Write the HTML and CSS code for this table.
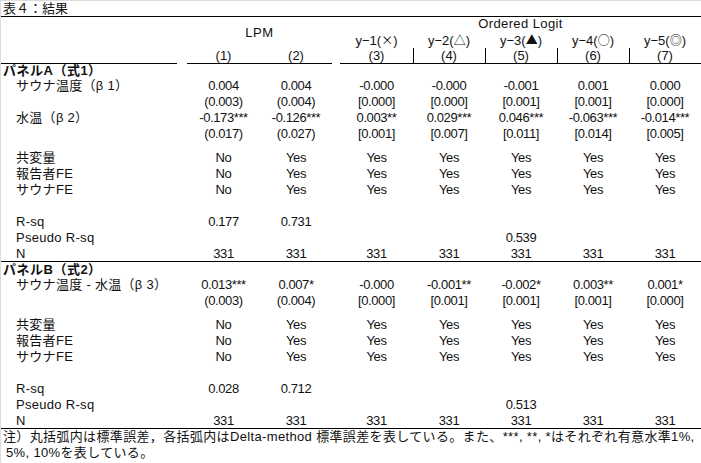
FILE: index.html
```html
<!DOCTYPE html>
<html lang="ja">
<head>
<meta charset="utf-8">
<title>表4：結果</title>
<link rel="stylesheet" href="styles.css">
</head>
<body>
<div class="sheet">
  <div class="title">表４：結果</div>

  <div class="head">
    <div class="h-label"></div>
    <div class="h-lpm">LPM</div>
    <div class="h-ol">Ordered Logit</div>
    <div class="h-y c3">y−1(<span class="sym">×</span>)</div>
    <div class="h-y c4">y−2(<span class="sym">△</span>)</div>
    <div class="h-y c5">y−3(<span class="sym">▲</span>)</div>
    <div class="h-y c6">y−4(<span class="sym">○</span>)</div>
    <div class="h-y c7">y−5(<span class="sym">◎</span>)</div>
    <div class="h-n c1">(1)</div>
    <div class="h-n c2">(2)</div>
    <div class="h-n c3">(3)</div>
    <div class="h-n c4">(4)</div>
    <div class="h-n c5">(5)</div>
    <div class="h-n c6">(6)</div>
    <div class="h-n c7">(7)</div>
  </div>

  <!-- Panel A -->
  <div class="row panel panel-a"><div class="lab bold">パネルA（式1）</div></div>
  <div class="row">
    <div class="lab sub">サウナ温度（β 1）</div><div></div>
    <div class="v">0.004</div><div class="v">0.004</div><div></div>
    <div class="v">-0.000</div><div class="v">-0.000</div><div class="v">-0.001</div><div class="v">0.001</div><div class="v">0.000</div>
  </div>
  <div class="row">
    <div class="lab"></div><div></div>
    <div class="v">(0.003)</div><div class="v">(0.004)</div><div></div>
    <div class="v">[0.000]</div><div class="v">[0.000]</div><div class="v">[0.001]</div><div class="v">[0.001]</div><div class="v">[0.000]</div>
  </div>
  <div class="row">
    <div class="lab sub">水温（β 2）</div><div></div>
    <div class="v">-0.173***</div><div class="v">-0.126***</div><div></div>
    <div class="v">0.003**</div><div class="v">0.029***</div><div class="v">0.046***</div><div class="v">-0.063***</div><div class="v">-0.014***</div>
  </div>
  <div class="row">
    <div class="lab"></div><div></div>
    <div class="v">(0.017)</div><div class="v">(0.027)</div><div></div>
    <div class="v">[0.001]</div><div class="v">[0.007]</div><div class="v">[0.011]</div><div class="v">[0.014]</div><div class="v">[0.005]</div>
  </div>
  <div class="row gap8"></div>
  <div class="row">
    <div class="lab sub">共変量</div><div></div>
    <div class="v">No</div><div class="v">Yes</div><div></div>
    <div class="v">Yes</div><div class="v">Yes</div><div class="v">Yes</div><div class="v">Yes</div><div class="v">Yes</div>
  </div>
  <div class="row">
    <div class="lab sub">報告者FE</div><div></div>
    <div class="v">No</div><div class="v">Yes</div><div></div>
    <div class="v">Yes</div><div class="v">Yes</div><div class="v">Yes</div><div class="v">Yes</div><div class="v">Yes</div>
  </div>
  <div class="row">
    <div class="lab sub">サウナFE</div><div></div>
    <div class="v">No</div><div class="v">Yes</div><div></div>
    <div class="v">Yes</div><div class="v">Yes</div><div class="v">Yes</div><div class="v">Yes</div><div class="v">Yes</div>
  </div>
  <div class="row"></div>
  <div class="row">
    <div class="lab sub">R-sq</div><div></div>
    <div class="v">0.177</div><div class="v">0.731</div>
  </div>
  <div class="row">
    <div class="lab sub">Pseudo R-sq</div><div></div>
    <div class="v"></div><div class="v"></div><div></div>
    <div class="v"></div><div class="v"></div><div class="v">0.539</div>
  </div>
  <div class="row rule">
    <div class="lab sub">N</div><div></div>
    <div class="v">331</div><div class="v">331</div><div></div>
    <div class="v">331</div><div class="v">331</div><div class="v">331</div><div class="v">331</div><div class="v">331</div>
  </div>

  <!-- Panel B -->
  <div class="row panel panel-b"><div class="lab bold">パネルB（式2）</div></div>
  <div class="row">
    <div class="lab sub">サウナ温度 - 水温（β 3）</div><div></div>
    <div class="v">0.013***</div><div class="v">0.007*</div><div></div>
    <div class="v">-0.000</div><div class="v">-0.001**</div><div class="v">-0.002*</div><div class="v">0.003**</div><div class="v">0.001*</div>
  </div>
  <div class="row">
    <div class="lab"></div><div></div>
    <div class="v">(0.003)</div><div class="v">(0.004)</div><div></div>
    <div class="v">[0.000]</div><div class="v">[0.001]</div><div class="v">[0.001]</div><div class="v">[0.001]</div><div class="v">[0.000]</div>
  </div>
  <div class="row gap8"></div>
  <div class="row">
    <div class="lab sub">共変量</div><div></div>
    <div class="v">No</div><div class="v">Yes</div><div></div>
    <div class="v">Yes</div><div class="v">Yes</div><div class="v">Yes</div><div class="v">Yes</div><div class="v">Yes</div>
  </div>
  <div class="row">
    <div class="lab sub">報告者FE</div><div></div>
    <div class="v">No</div><div class="v">Yes</div><div></div>
    <div class="v">Yes</div><div class="v">Yes</div><div class="v">Yes</div><div class="v">Yes</div><div class="v">Yes</div>
  </div>
  <div class="row">
    <div class="lab sub">サウナFE</div><div></div>
    <div class="v">No</div><div class="v">Yes</div><div></div>
    <div class="v">Yes</div><div class="v">Yes</div><div class="v">Yes</div><div class="v">Yes</div><div class="v">Yes</div>
  </div>
  <div class="row"></div>
  <div class="row">
    <div class="lab sub">R-sq</div><div></div>
    <div class="v">0.028</div><div class="v">0.712</div>
  </div>
  <div class="row">
    <div class="lab sub">Pseudo R-sq</div><div></div>
    <div class="v"></div><div class="v"></div><div></div>
    <div class="v"></div><div class="v"></div><div class="v">0.513</div>
  </div>
  <div class="row rule">
    <div class="lab sub">N</div><div></div>
    <div class="v">331</div><div class="v">331</div><div></div>
    <div class="v">331</div><div class="v">331</div><div class="v">331</div><div class="v">331</div><div class="v">331</div>
  </div>

  <div class="note">
    <div class="note-line">注）丸括弧内は標準誤差，各括弧内はDelta-method 標準誤差を表している。また、***, **, *はそれぞれ有意水準1%,</div>
    <div class="note-line second">5%, 10%を表している。</div>
  </div>
</div>
</body>
</html>
```

FILE: styles.css
```css
html, body {
  margin: 0;
  padding: 0;
  background: #ffffff;
}

body {
  width: 701px;
  height: 463px;
  overflow: hidden;
  font-family: "Liberation Sans", "Noto Sans CJK JP", sans-serif;
  font-size: 13px;
  color: #111;
}

.sheet {
  box-sizing: border-box;
  width: 701px;
  height: 463px;
  border-top: 1px solid #dcdcdc;
  border-left: 1px solid #dcdcdc;
}

.title {
  height: 15px;
  line-height: 15px;
  padding-left: 2px;
  border-bottom: 1px solid #000;
}

/* shared column template: label | gap | (1) (2) | gap | (3)..(7) */
.head,
.row {
  display: grid;
  grid-template-columns: 176px 10px 73px 72px 8px 73px 72px 72px 72px 72px;
}

.head {
  grid-template-rows: 15px 16px 16px;
  line-height: 16px;
}

.h-label {
  grid-column: 1;
  grid-row: 1 / 4;
  border-bottom: 1px solid #000;
}

.h-lpm {
  grid-column: 3 / 5;
  grid-row: 1 / 3;
  align-self: center;
  text-align: center;
  letter-spacing: 0.6px;
}

.h-ol {
  grid-column: 6 / 11;
  grid-row: 1;
  text-align: center;
  line-height: 13px;
  letter-spacing: 0.4px;
}

.h-y {
  grid-row: 2;
  text-align: center;
  white-space: nowrap;
}

.sym {
  font-family: "Noto Sans CJK JP", sans-serif;
  font-size: 12px;
}

.h-n {
  grid-row: 3;
  text-align: center;
  border-bottom: 1px solid #000;
  line-height: 15px;
}

.c1 { grid-column: 3; }
.c2 { grid-column: 4; }
.c3 { grid-column: 6; }
.c4 { grid-column: 7; }
.c5 { grid-column: 8; }
.c6 { grid-column: 9; }
.c7 { grid-column: 10; }

.h-n.c3, .h-n.c4, .h-n.c5, .h-n.c6 { box-shadow: 1px 0 0 #000; }

.row {
  height: 16px;
  line-height: 16px;
}

.row.panel-a { height: 14px; line-height: 14px; }
.row.panel-b { height: 15px; line-height: 15px; }
.row.gap8 { height: 8px; }

.row.rule {
  height: 15px;
  line-height: 15px;
  border-bottom: 1px solid #000;
}

.lab {
  white-space: nowrap;
  padding-left: 2px;
}

.lab.sub {
  padding-left: 15px;
  letter-spacing: 0.3px;
}

.bold {
  font-weight: bold;
  letter-spacing: 0.5px;
}

.v {
  text-align: center;
  white-space: nowrap;
  letter-spacing: -0.4px;
}

.note {
  padding-left: 2px;
}

.note-line {
  height: 16px;
  line-height: 16px;
  white-space: nowrap;
  letter-spacing: 0.35px;
}

.note-line.second {
  padding-left: 3px;
}
```
